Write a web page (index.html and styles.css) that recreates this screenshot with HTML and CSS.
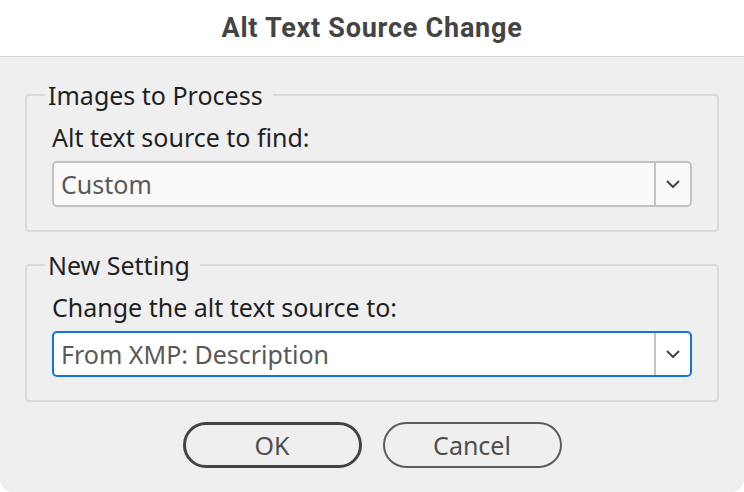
FILE: index.html
```html
<!DOCTYPE html>
<html lang="en">
<head>
<meta charset="utf-8">
<title>Alt Text Source Change</title>
<link rel="stylesheet" href="styles.css">
</head>
<body>
<div class="dialog">
  <header class="titlebar">
    <h1 class="title">Alt Text Source Change</h1>
  </header>
  <main class="body">
    <fieldset class="group">
      <legend class="group-title">Images to Process</legend>
      <label class="field-label">Alt text source to find:</label>
      <div class="select">
        <span class="select-value">Custom</span>
        <span class="select-arrow">
          <svg width="14" height="8" viewBox="0 0 14 8"><path d="M1 1l6 6 6-6" fill="none" stroke="#444" stroke-width="2"/></svg>
        </span>
      </div>
    </fieldset>
    <fieldset class="group">
      <legend class="group-title">New Setting</legend>
      <label class="field-label">Change the alt text source to:</label>
      <div class="select select-focused">
        <span class="select-value">From XMP: Description</span>
        <span class="select-arrow">
          <svg width="14" height="8" viewBox="0 0 14 8"><path d="M1 1l6 6 6-6" fill="none" stroke="#444" stroke-width="2"/></svg>
        </span>
      </div>
    </fieldset>
    <div class="actions">
      <button class="btn btn-default" type="button">OK</button>
      <button class="btn" type="button">Cancel</button>
    </div>
  </main>
</div>
</body>
</html>
```

FILE: styles.css
```css
html, body {
  margin: 0;
  padding: 0;
  background: #ffffff;
}

.dialog {
  width: 744px;
  height: 492px;
  display: flex;
  flex-direction: column;
  background: #efefef;
  border-radius: 0 0 13px 13px;
  overflow: hidden;
  font-family: "Noto Sans", "Open Sans", sans-serif;
}

.titlebar {
  height: 56px;
  flex: none;
  background: #ffffff;
  border-bottom: 1px solid #d6d6d6;
  display: flex;
  align-items: center;
  justify-content: center;
}

.title {
  margin: 0;
  font-family: Roboto, "Liberation Sans", sans-serif;
  font-weight: 700;
  font-size: 27px;
  letter-spacing: 0.75px;
  color: #444444;
  line-height: 32px;
}

.body {
  flex: 1;
  display: flex;
  flex-direction: column;
  padding: 23px 25px 0;
}

.group {
  margin: 0 0 18px;
  padding: 12px 25px 23px;
  border: 2px solid #dadada;
  border-radius: 4px;
  min-width: 0;
}

.group-title {
  margin-left: -7px;
  padding: 0 10px 0 3px;
  font-size: 25px;
  line-height: 30px;
  color: #1f1f1f;
}

.field-label {
  display: block;
  font-size: 25px;
  line-height: 30px;
  color: #1f1f1f;
  margin-bottom: 9px;
}

.select {
  height: 46px;
  box-sizing: border-box;
  display: flex;
  border: 2px solid #c3c3c3;
  border-radius: 5px;
  background: #fafafa;
}

.select-focused {
  border-color: #1473e6;
  background: #ffffff;
}

.select-value {
  flex: 1;
  display: flex;
  align-items: center;
  padding-left: 7px;
  font-size: 25px;
  color: #595959;
}

.select-arrow {
  width: 34px;
  flex: none;
  display: flex;
  align-items: center;
  justify-content: center;
  border-left: 2px solid #c3c3c3;
}

.actions {
  display: flex;
  justify-content: center;
  gap: 21px;
  margin-top: 2px;
}

.btn {
  width: 179px;
  height: 46px;
  box-sizing: border-box;
  border: 2px solid #5c5c5c;
  border-radius: 23px;
  background: transparent;
  font-family: "Noto Sans", "Open Sans", sans-serif;
  font-size: 25px;
  color: #4f4f4f;
  padding: 0;
}

.btn-default {
  border: 3px solid #434343;
}
```
